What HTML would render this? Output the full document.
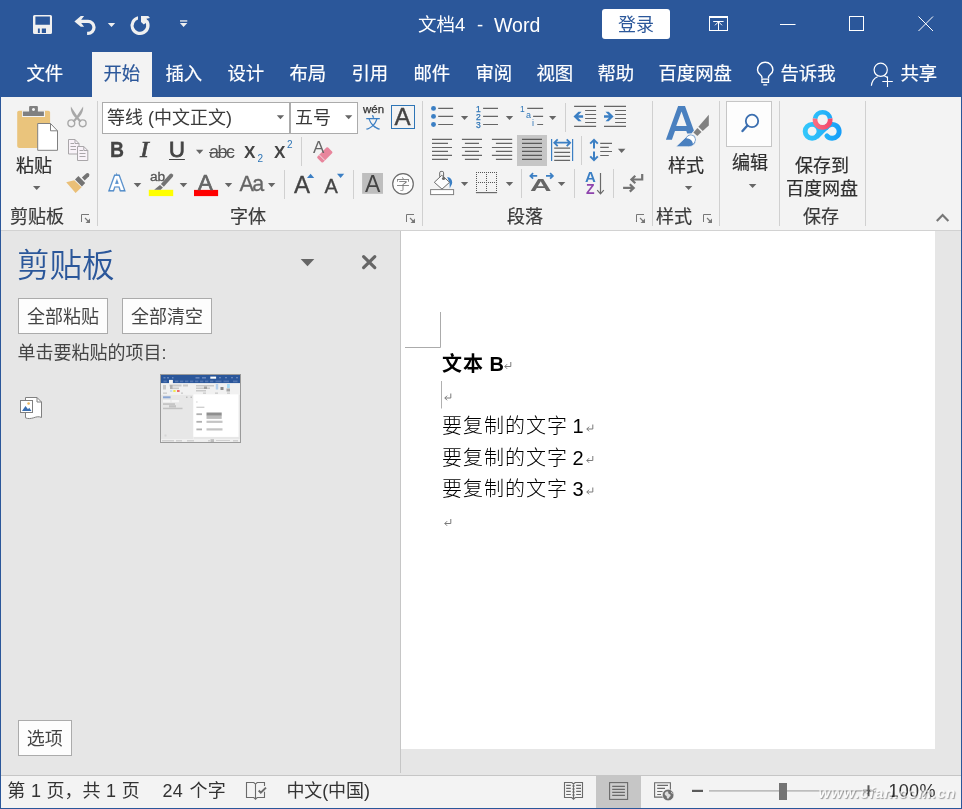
<!DOCTYPE html>
<html lang="zh-CN">
<head>
<meta charset="utf-8">
<title>文档4 - Word</title>
<style>
*{box-sizing:border-box;margin:0;padding:0}
html,body{width:962px;height:809px;overflow:hidden;background:#2b579a}
body{position:relative;font-family:"Liberation Sans","Noto Sans CJK SC",sans-serif;font-size:18px;color:#262626}
.a{position:absolute;white-space:nowrap;line-height:1}
#root{position:absolute;left:0;top:0;width:962px;height:809px;will-change:transform}
.lcd{will-change:auto}
svg{position:absolute;overflow:visible;left:0;top:0}
#title{left:0;top:0;width:962px;height:97px;background:#2b579a}
.tt{color:#fff;font-size:18px}
.tab{color:#fff;font-size:18.400px;top:64px;height:20px;line-height:20px;margin-left:-0.600px;-webkit-text-stroke:0.2px currentColor}
#tabhome{left:92px;top:52px;width:60px;height:46px;background:#f3f3f3}
#ribbon{left:1px;top:97px;width:960px;height:133px;background:#f3f3f3}
#ribline{left:1px;top:230px;width:960px;height:1px;background:#d2d2d2}
.gl{font-size:18px;color:#3a3a3a;top:207px;height:20px;line-height:20px;-webkit-text-stroke:0.2px #3a3a3a}
.rt{font-size:18px;color:#2e2e2e;height:20px;line-height:20px;-webkit-text-stroke:0.2px #2e2e2e}
.g{color:#444}
.lt{font-family:"Liberation Sans",sans-serif;color:#444}
#pane{left:1px;top:231px;width:400px;height:544px;background:#e6e6e6}
#panediv{left:400px;top:231px;width:1px;height:542px;background:#c6c6c6}
#work{left:401px;top:231px;width:560px;height:544px;background:#e6e6e6}
#page{left:401px;top:231px;width:534px;height:518px;background:#fff}
#status{left:1px;top:775px;width:960px;height:33px;background:#f3f3f3;border-top:1px solid #c6c6c6}
.st{font-size:18px;color:#333;top:781px;height:20px;line-height:20px}
.btn{background:#fdfdfd;border:1px solid #ababab;font-size:18px;color:#444;text-align:center}
.doc{font-size:20px;color:#000;letter-spacing:1px;height:24px;line-height:24px}
.box{background:#fff;border:1px solid #ababab}
</style>
</head>
<body>
<div id="root">
<div class="a" id="title"></div>
<div class="a" id="tabhome"></div>
<div class="a" id="ribbon"></div>
<div class="a" id="ribline"></div>
<div class="a" id="pane"></div>
<div class="a" id="work"></div>
<div class="a" id="page"></div>
<div class="a" id="panediv"></div>
<div class="a" id="status"></div>

<!-- TITLE BAR -->
<div class="a tt" style="left:418px;top:15px;height:20px;line-height:20px;font-size:18.5px">文档4</div>
<div class="a tt" style="left:477px;top:15px;height:20px;line-height:20px;font-size:18.5px">-</div>
<div class="a tt" style="left:494px;top:15px;height:20px;line-height:20px;font-size:19.5px">Word</div>
<div class="a" style="left:602px;top:9px;width:68px;height:30px;background:#fff;border-radius:3px;color:#2b579a;font-size:18px;line-height:33px;text-align:center">登录</div>

<svg id="ticons" width="962" height="97" viewBox="0 0 962 97">
 <g fill="#f0f0f0">
  <path fill-rule="evenodd" d="M34.5 15h16a1.5 1.5 0 0 1 1.5 1.5v16a1.5 1.5 0 0 1-1.5 1.5h-16a1.5 1.5 0 0 1-1.5-1.5v-16a1.5 1.5 0 0 1 1.5-1.5zM35.4 16.4v8.4h14.5v-8.4zM37.9 28.4v4.6h1.9v-4.6zM41.8 28.4v4.6h4.2v-4.6z"/>
  <path d="M74.4 21.4l6.4-5.400h3.300l-2.900 3.700h6.800a7.650 7.650 0 0 1 0 15.300h-0.900v-3.300h0.900a4.350 4.350 0 0 0 0-8.700h-6.800l2.900 3.700h-3.300z"/>
  <path d="M107.800 22.900h7.400l-3.700 4.100z"/>
  <path d="M138 16.200v3.300a6.300 6.300 0 1 0 7.300 2.600l2.600-2a9.550 9.550 0 1 1-9.900-3.900z"/>
  <path d="M141 15.900h7.200l1.800 2.200-3.600 0.600 1.700 2.500-4.300 3.300-2.800-2.600z"/>
  <rect x="180" y="20.300" width="7.300" height="1.300"/>
  <path d="M179.900 22.900h7.400l-3.700 4.100z"/>
 </g>
 <g fill="none" stroke="#fff" stroke-width="1">
  <rect x="709.500" y="16.500" width="18" height="14"/>
  <path d="M709.500 17.500h18M713.200 21.500h10.400M718.500 30v-8M715 25.300l3.500-3.500 3.500 3.500"/>
  <path d="M780 24.500h15.500"/>
  <rect x="849.500" y="16.500" width="14" height="14"/>
  <path d="M918.500 16.500l14.500 14.500M933 16.500l-14.500 14.500"/>
 </g>
 <g fill="none" stroke="#fff" stroke-width="1.400">
  <path d="M761.900 78.400v-1.500c0-1.700-4.400-3.300-4.400-7a7.700 7.700 0 0 1 15.400 0c0 3.700-4.400 5.300-4.400 7v1.500"/>
  <path stroke-width="1.300" d="M761.900 79.100h6.600v3.200h-6.600zM763.300 84.800h3.900"/>
 </g>
 <g fill="none" stroke="#fff" stroke-width="1.200">
  <circle cx="880.700" cy="69.800" r="6.600"/>
  <path d="M871.400 85.800c0.400-4.400 2.600-7.600 6.200-9.100M884 75.700c1.300 0.400 2.400 1 3.300 1.800"/>
  <path stroke-width="1.100" d="M882.300 81.500h10.500M887.500 76.500v10.500"/>
 </g>
</svg>

<!-- TABS -->
<div class="a tab" style="left:27px">文件</div>
<div class="a tab" style="left:104px;color:#2b579a">开始</div>
<div class="a tab" style="left:166px">插入</div>
<div class="a tab" style="left:228px">设计</div>
<div class="a tab" style="left:290px">布局</div>
<div class="a tab" style="left:352px">引用</div>
<div class="a tab" style="left:414px">邮件</div>
<div class="a tab" style="left:476px">审阅</div>
<div class="a tab" style="left:537px">视图</div>
<div class="a tab" style="left:598px">帮助</div>
<div class="a tab" style="left:659px">百度网盘</div>
<div class="a tab" style="left:781px">告诉我</div>
<div class="a tab" style="left:901px">共享</div>

<!-- RIBBON -->
<div class="a box" style="left:102px;top:102px;width:188px;height:32px"></div>
<div class="a box" style="left:290px;top:102px;width:68px;height:32px"></div>
<svg id="ribicons" width="962" height="231" viewBox="0 0 962 231">
<rect x="97" y="101" width="1" height="125" fill="#d0d0d0"/>
<rect x="422" y="101" width="1" height="125" fill="#d0d0d0"/>
<rect x="652" y="101" width="1" height="125" fill="#d0d0d0"/>
<rect x="719" y="101" width="1" height="125" fill="#d0d0d0"/>
<rect x="779" y="101" width="1" height="125" fill="#d0d0d0"/>
<rect x="865" y="101" width="1" height="125" fill="#d0d0d0"/>
<rect x="301" y="137" width="1" height="29" fill="#d0d0d0"/>
<rect x="284" y="170" width="1" height="29" fill="#d0d0d0"/>
<rect x="353" y="170" width="1" height="29" fill="#d0d0d0"/>
<rect x="565" y="103" width="1" height="29" fill="#d0d0d0"/>
<rect x="581" y="136" width="1" height="29" fill="#d0d0d0"/>
<rect x="521" y="169" width="1" height="29" fill="#d0d0d0"/>
<rect x="574" y="169" width="1" height="29" fill="#d0d0d0"/>
<rect x="613" y="169" width="1" height="29" fill="#d0d0d0"/>
<g id="paste">
<rect x="17.200" y="110.800" width="32.900" height="37.100" rx="1.800" fill="#eac47c"/>
<path fill="#f3f3f3" d="M22 110.500h6.300v-5.200h10.400v5.200h6.300v6.400h-23z"/>
<path fill="#808080" fill-rule="evenodd" d="M22.900 111.600h6.200v-4.500a1 1 0 0 1 1-1h6.800a1 1 0 0 1 1 1v4.500h6v4.300h-21zM33.500 108a1.500 1.500 0 1 0 0.010 0z"/>
<path fill="#fff" stroke="#808080" stroke-width="1" d="M37.700 123.500h12.800l7 7.300v19.500h-19.800z"/>
<path fill="none" stroke="#808080" stroke-width="1" d="M50.500 123.500v7.300h7"/>
</g>
<path fill="#666" d="M33 186H40.4L36.7 190.1z"/>
<g id="cut" fill="none" stroke="#a8a8a8">
<circle cx="71.300" cy="123.300" r="3.400" stroke-width="1.400"/><circle cx="82.700" cy="123.300" r="3.400" stroke-width="1.400"/>
<path fill="#a8a8a8" stroke="none" d="M70.900 106.400c-0.600 4.500 1.800 8.500 4.600 11.400l-3 3.200 1.700 1.400 2.800-3.200 2.800 3.200 1.700-1.400-3-3.200c2.800-2.900 5.200-6.900 4.600-11.400l-6.100 9.400z"/>
</g>
<g id="copy" fill="#f8f2f8" stroke="#a9a6a9" stroke-width="1">
<path d="M68.500 139.500h6.500l4 4v10.500h-10.500z"/><path fill="none" d="M75 139.500v4h4"/>
<path d="M77.500 146.500h6.300l4 4v10h-10.300z"/><path fill="none" d="M83.800 146.500v4h4"/>
<path fill="none" d="M70.500 143.500h3.500M70.500 146.500h5.500M70.500 149.500h5.500M79.500 150.500h3.500M79.500 153.500h6M79.500 156.500h6"/>
</g>
<g id="painter">
<path fill="#eabf77" d="M66.200 182.300l8.100-2 7.300 6.900-6 5.800z"/>
<path fill="#737373" d="M75 179.600l3.400-3.600 6.800 6.900-3.300 3.500z"/>
<path fill="#737373" d="M81.900 177.600l4.300-4.200a2 2 0 0 1 2.800 2.800l-4.300 4.200z"/>
</g>
<path fill="none" stroke="#777" stroke-width="1" d="M81.5 222V214.5H89"/><path fill="none" stroke="#777" stroke-width="1.1" d="M85 218L89 222"/><path fill="#777" d="M90 218.6V223H85.6z"/>
<g id="hl">
<rect x="148.800" y="189.800" width="24.400" height="6.300" fill="#ffff00"/>
<path fill="#737373" d="M169.900 174.100a2 2 0 0 1 2.900 2.700l-9 9.900-2.900-2.700z"/>
<path fill="#737373" d="M160 184.900l2.900 2.700-2.200 2.200h-6.500z"/>
</g>
<rect x="194" y="189.900" width="24.100" height="6.200" fill="#ff0000"/>
<path fill="#666" d="M133.7 182.9H141.3L137.5 187.2z"/>
<path fill="#666" d="M179.7 182.9H187.3L183.5 187.2z"/>
<path fill="#666" d="M224.8 182.9H232.2L228.5 187.2z"/>
<path fill="#666" d="M268 182.9H275.3L271.65 187.2z"/>
<path fill="#666" d="M196 149.8H203.3L199.65 154z"/>
<path fill="#666" d="M276.8 115.2H284.1L280.45 119.2z"/>
<path fill="#666" d="M345 115.2H352.3L348.65 119.2z"/>
<rect x="-7.500" y="-4" width="15" height="8" rx="1.200" fill="#e8859c" transform="translate(324.800 154.900) rotate(-45)"/>
<path stroke="#f3f3f3" stroke-width="0.800" d="M319.200 154.800l5.700 5.700"/>
<path fill="#3b7fc4" d="M307 177.900h7.200l-3.600-4.200z"/>
<path fill="#3b7fc4" d="M337 173.700h7.200l-3.600 4.200z"/>
<rect x="391.500" y="105.500" width="23" height="23" fill="none" stroke="#2e75b6" stroke-width="1"/>
<rect x="362.100" y="173" width="20.900" height="20.800" fill="#bebebe"/>
<circle cx="403" cy="183.900" r="10.300" fill="#fdfdfd" stroke="#6a6a6a" stroke-width="1.200"/>
<path fill="none" stroke="#777" stroke-width="1" d="M406.5 222V214.5H414"/><path fill="none" stroke="#777" stroke-width="1.1" d="M410 218L414 222"/><path fill="#777" d="M415 218.6V223H410.6z"/>
<g fill="#3b7fc4"><circle cx="433.500" cy="108.400" r="2.450"/><circle cx="433.500" cy="116.400" r="2.450"/><circle cx="433.500" cy="124.500" r="2.450"/></g>
<path fill="none" stroke="#666" stroke-width="1.2" d="M438.2 108.4H453.1M438.2 116.4H453.1M438.2 124.5H453.1"/>
<path fill="#666" d="M460.9 116H468.2L464.55 120.1z"/>
<path fill="none" stroke="#666" stroke-width="1.2" d="M483.1 108.4H498M483.1 116.4H498M483.1 124.5H498"/>
<path fill="#666" d="M505.8 116H513.2L509.5 120.1z"/>
<path fill="none" stroke="#666" stroke-width="1.2" d="M527.2 108.4H543.1M533.1 116.4H543.1M537.2 124.5H543.1"/>
<path fill="#666" d="M549 116H556.3L552.65 120.1z"/>
<path fill="none" stroke="#666" stroke-width="1.2" d="M574.1 106.4H596.1M585.1 110.5H596.1M585.1 114.5H596.1M585.1 118.5H596.1M585.1 122.5H596.1M574.1 126.4H596.1"/>
<path fill="#3b7fc4" d="M573.500 116.500l4.900-4.800h3.200l-3.400 3.500h4.900v2.600h-4.900l3.400 3.500h-3.200z"/>
<path fill="none" stroke="#666" stroke-width="1.2" d="M604 106.4H626M615.1 110.5H626M615.1 114.5H626M615.1 118.5H626M615.1 122.5H626M604 126.4H626"/>
<path fill="#3b7fc4" d="M613.600 116.500l-4.900-4.800h-3.200l3.400 3.500h-4.900v2.600h4.900l-3.400 3.500h3.200z"/>
<path fill="none" stroke="#666" stroke-width="1.2" d="M432 139.4H452M432 143.4H448M432 147.5H452M432 151.4H448M432 155.4H452M432 159.4H448"/>
<path fill="none" stroke="#666" stroke-width="1.2" d="M461.9 139.4H482M464.9 143.4H479M461.9 147.5H482M464.9 151.4H479M461.9 155.4H482M464.9 159.4H479"/>
<path fill="none" stroke="#666" stroke-width="1.2" d="M491.9 139.4H512.2M495.9 143.4H512.2M491.9 147.5H512.2M495.9 151.4H512.2M491.9 155.4H512.2M495.9 159.4H512.2"/>
<rect x="517" y="135" width="30" height="31" fill="#c6c6c6"/>
<path fill="none" stroke="#5a5a5a" stroke-width="1.2" d="M522 139.4H542M522 143.4H542M522 147.5H542M522 151.4H542M522 155.4H542M522 159.4H542"/>
<path fill="none" stroke="#3b7fc4" stroke-width="1.200" d="M551.600 138.900v22M572.600 138.900v22"/>
<path fill="none" stroke="#3b7fc4" stroke-width="1.800" d="M554.400 142.700h15.600M557.700 139.300l-3.400 3.400 3.400 3.400M566.700 139.300l3.400 3.400-3.400 3.400"/>
<path fill="none" stroke="#666" stroke-width="1.2" d="M554.2 148.2H570.1M554.2 152.3H570.1M554.2 156.4H570.1M554.2 160.4H570.1"/>
<path fill="none" stroke="#3b7fc4" stroke-width="2" d="M594 140.200v8.400M594 151.400v8.400M590.200 143.600l3.800-3.800 3.800 3.800M590.200 156.400l3.800 3.800 3.800-3.800"/>
<path fill="none" stroke="#666" stroke-width="1.2" d="M600.2 143.4H612M600.2 147.4H608.8M600.2 151.5H612M600.2 155.5H608.8"/>
<path fill="#666" d="M617.9 148.8H625.4L621.65 153.1z"/>
<g id="bucket">
<rect x="430.600" y="189.600" width="23" height="5" fill="#fff" stroke="#808080" stroke-width="1"/>
<path fill="#3b7fc4" d="M447.200 177c3.200 0.400 5 2.600 5 5.600 0 2-1.600 3.700-2.400 5.800l-0.300-5.600z"/>
<path fill="#fdfdfd" stroke="#6a6a6a" stroke-width="1" d="M434.300 182.300l7.500-7 7.800 7-7.600 6.800z"/>
<path fill="none" stroke="#6a6a6a" stroke-width="1" d="M439.700 176.800v-4a1.400 1.400 0 0 1 1.400-1.400h1.100a1.400 1.400 0 0 1 1.400 1.400v5.500"/>
<circle cx="443.500" cy="178.500" r="1.600" fill="#6a6a6a"/>
</g>
<path fill="#666" d="M460.9 182H468.2L464.55 186z"/>
<path fill="none" stroke="#555" stroke-width="1" stroke-dasharray="1 1" shape-rendering="crispEdges" d="M476 172.500h21M476 182.500h21M476.500 172v20M486.500 172v20M496.500 172v20"/>
<path fill="none" stroke="#6a6a6a" stroke-width="1.200" d="M475.900 192.600h21.200"/>
<path fill="#666" d="M505.8 182H513.2L509.5 186z"/>
<path fill="none" stroke="#3b7fc4" stroke-width="1.700" d="M530.300 175.900h6.900M533.100 173.100l-2.800 2.800 2.800 2.800M546 175.900h6.900M550.100 173.100l2.800 2.800-2.800 2.800"/>
<path fill="#666" d="M557.8 182H565.3L561.55 186z"/>
<path fill="none" stroke="#6a6a6a" stroke-width="1.200" d="M600.500 173v20.500M597.200 190.200l3.300 3.600 3.300-3.600"/>
<path fill="none" stroke="#737373" stroke-width="2.200" d="M642.200 174v5.500h-10.500M635.300 175.700l-3.900 3.800 3.900 3.800M623.100 187.900h10.500M629.800 184.200l3.900 3.700-3.900 3.700"/>
<path fill="none" stroke="#777" stroke-width="1" d="M636.5 222V214.5H644"/><path fill="none" stroke="#777" stroke-width="1.1" d="M640 218L644 222"/><path fill="#777" d="M645 218.6V223H640.6z"/>
<g id="styles">
<path fill="#4a80bf" fill-rule="evenodd" d="M678.100 106h6.900l8.900 24.600-2.500 2.900h-4.200l-0.900-2.600h-11.300l-3.100 8.900h-6zM681.500 111.500l-5.300 14.400h10.500z"/>
<path fill="#808080" d="M708.800 114.700v10.900l-6.100 5.300-4.300-4.200z"/>
<path fill="#808080" d="M693.400 132.400l4-4.300 4.100 4-4.200 4z"/>
<path fill="#4a80bf" stroke="#f3f3f3" stroke-width="0.700" d="M675.900 146.700l10.500-10c1-1.500 2.600-2.500 4.400-2.500a5.200 5.200 0 0 1 5.200 5.200c0 4.200-3.300 7.300-7.500 7.300z"/>
<path fill="#fff" d="M686.300 138.300c0.800-1.800 2.500-3.100 4.500-3.100a4.200 4.200 0 0 1 4.200 4.200c0 1.800-0.800 3.300-2.100 4.500-0.200-3-2.800-5.500-6.600-5.600z"/>
</g>
<path fill="#666" d="M684.9 186H692.3L688.6 190.1z"/>
<path fill="none" stroke="#777" stroke-width="1" d="M703.5 222V214.5H711"/><path fill="none" stroke="#777" stroke-width="1.1" d="M707 218L711 222"/><path fill="#777" d="M712 218.6V223H707.6z"/>
<rect x="726.500" y="101.500" width="45" height="45" fill="#fdfdfd" stroke="#c6c6c6" stroke-width="1"/>
<circle cx="752" cy="120.900" r="6.200" fill="none" stroke="#3b6fb0" stroke-width="1.800"/>
<path fill="none" stroke="#3b6fb0" stroke-width="2.400" stroke-linecap="round" d="M747.200 125.800l-4.700 5.200"/>
<path fill="#666" d="M748.8 183.9H756.4L752.6 188.1z"/>
<defs><linearGradient id="bg1" gradientUnits="userSpaceOnUse" x1="803" y1="0" x2="842" y2="0"><stop offset="0" stop-color="#34c8fb"/><stop offset="0.5" stop-color="#27b6f9"/><stop offset="1" stop-color="#159cf8"/></linearGradient><linearGradient id="bg2" gradientUnits="userSpaceOnUse" x1="813" y1="0" x2="832" y2="0"><stop offset="0" stop-color="#fb6f82"/><stop offset="1" stop-color="#f4476a"/></linearGradient></defs>
<g id="baidu" fill="none" stroke-width="4.900" stroke="url(#bg1)">
<circle cx="812.100" cy="131.300" r="6.950"/>
<path stroke-linecap="round" d="M826.900 135.800a6.950 6.950 0 1 0 -0.700-8"/>
<path stroke-width="5.200" d="M816.600 136.700l10.800-10.800"/>
<path stroke-width="4.700" d="M815.100 118.600a7.600 7.600 0 0 1 15 0"/>
<path stroke-width="4.700" stroke="url(#bg2)" d="M815.100 118.600a7.600 7.600 0 1 0 15 0"/>
</g>
<path fill="none" stroke="#777" stroke-width="2.200" d="M936.800 221l5.800-6 5.800 6"/>
</svg>

<!-- ribbon text -->
<div class="a rt" style="left:16px;top:156px">粘贴</div>
<div class="a gl" style="left:10px">剪贴板</div>
<div class="a rt" style="left:107px;top:108px;color:#3a3a3a;-webkit-text-stroke:0">等线 (中文正文)</div>
<div class="a rt" style="left:295px;top:108px;color:#3a3a3a;-webkit-text-stroke:0">五号</div>
<div class="a lt" style="left:363px;top:103px;font-size:11.500px;height:12px;line-height:12px;color:#333;-webkit-text-stroke:0.25px #333">wén</div>
<div class="a" style="left:365.500px;top:114px;font-size:15px;height:18px;line-height:18px;color:#3b7fc4">文</div>
<div class="a lt" style="left:394px;top:105px;font-size:24px;height:24px;line-height:24px;width:17px;text-align:center;-webkit-text-stroke:0.4px #444">A</div>
<div class="a lt" style="left:110px;top:139px;font-size:22px;height:22px;line-height:22px;font-weight:bold;-webkit-text-stroke:0.3px #444;transform:scaleX(0.88);transform-origin:0 0">B</div>
<div class="a" style="left:140px;top:139px;font-family:'Liberation Serif',serif;color:#444;font-size:23px;height:22px;line-height:22px;font-style:italic;-webkit-text-stroke:0.6px #444;transform:scaleX(1.15);transform-origin:0 0">I</div>
<div class="a lt" style="left:169px;top:139px;font-size:22px;height:22px;line-height:22px;text-decoration:underline;text-underline-offset:2px;text-decoration-thickness:1px;-webkit-text-stroke:0.8px #444">U</div>
<div class="a lt" style="left:209px;top:141px;font-size:18px;height:22px;line-height:22px;text-decoration:line-through;text-decoration-thickness:1px;letter-spacing:-1.5px;color:#555">abc</div>
<div class="a lt" style="left:244.300px;top:142px;font-size:16.5px;height:20px;line-height:20px;font-weight:bold;transform:scaleX(1.04);transform-origin:0 0">X</div>
<div class="a lt" style="left:257.500px;top:154px;font-size:10px;height:10px;line-height:10px;color:#2e75b6">2</div>
<div class="a lt" style="left:274px;top:142px;font-size:16.5px;height:20px;line-height:20px;font-weight:bold;transform:scaleX(1.04);transform-origin:0 0">X</div>
<div class="a lt" style="left:287px;top:140px;font-size:10px;height:10px;line-height:10px;color:#2e75b6">2</div>
<div class="a lt" style="left:313px;top:139px;font-size:17px;height:18px;line-height:18px;color:#666">A</div>
<div class="a lt" style="left:109.500px;top:171px;font-size:20.500px;height:24px;line-height:24px;font-weight:bold;color:#fff;-webkit-text-stroke:2.800px #4a86c5;paint-order:stroke fill;text-shadow:0 0 2px #a8c8ee">A</div>
<div class="a lt" style="left:149.500px;top:171px;font-size:12px;height:12px;line-height:12px;color:#555;-webkit-text-stroke:0.3px #555;transform:scaleX(1.14);transform-origin:0 0">ab</div>
<div class="a lt" style="left:198px;top:171px;font-size:22px;height:24px;line-height:24px;color:#666;-webkit-text-stroke:0.7px #666">A</div>
<div class="a lt" style="left:239.500px;top:172px;font-size:21.500px;height:24px;line-height:24px;color:#666;letter-spacing:-1.500px;-webkit-text-stroke:0.3px #666">Aa</div>
<div class="a lt" style="left:294px;top:173px;font-size:24px;height:24px;line-height:24px;-webkit-text-stroke:0.3px #444">A</div>
<div class="a lt" style="left:324.500px;top:175px;font-size:20px;height:22px;line-height:22px;-webkit-text-stroke:0.3px #444">A</div>
<div class="a lt" style="left:365px;top:172px;font-size:23px;height:24px;line-height:24px">A</div>
<div class="a" style="left:396px;top:176px;font-size:14px;height:16px;line-height:16px;color:#666;font-weight:300">字</div>
<div class="a gl" style="left:230px">字体</div>
<div class="a lt" style="left:476px;top:105px;font-size:8.500px;height:8px;line-height:8px;color:#2e75b6;-webkit-text-stroke:0.25px #2e75b6">1</div>
<div class="a lt" style="left:476px;top:113px;font-size:8.500px;height:8px;line-height:8px;color:#2e75b6;-webkit-text-stroke:0.25px #2e75b6">2</div>
<div class="a lt" style="left:476px;top:121px;font-size:8.500px;height:8px;line-height:8px;color:#2e75b6;-webkit-text-stroke:0.25px #2e75b6">3</div>
<div class="a lt" style="left:520px;top:105px;font-size:8.500px;height:8px;line-height:8px;color:#2e75b6">1</div>
<div class="a lt" style="left:526px;top:111px;font-size:9px;height:9px;line-height:9px;color:#2e75b6">a</div>
<div class="a lt" style="left:532px;top:119px;font-size:9px;height:9px;line-height:9px;color:#2e75b6">i</div>
<div class="a lt" style="left:530px;top:176px;font-size:16.500px;height:18px;line-height:18px;color:#666;font-weight:bold;transform:scale(1.8,1);transform-origin:0 0">A</div>
<div class="a lt" style="left:585px;top:169px;font-size:15px;height:16px;line-height:16px;color:#3b7fc4;font-weight:bold">A</div>
<div class="a lt" style="left:586px;top:182px;font-size:14px;height:15px;line-height:15px;color:#8e44ad;font-weight:bold">Z</div>
<div class="a gl" style="left:507px">段落</div>
<div class="a gl" style="left:656px">样式</div>
<div class="a gl" style="left:803px">保存</div>
<div class="a rt" style="left:668px;top:156px">样式</div>
<div class="a rt" style="left:732px;top:153px">编辑</div>
<div class="a rt" style="left:795px;top:156px">保存到</div>
<div class="a rt" style="left:786px;top:179px">百度网盘</div>

<!-- PANE -->
<div class="a" style="left:17px;top:247px;font-size:32.500px;color:#2b579a;height:38px;line-height:38px;font-weight:350">剪贴板</div>
<svg width="962" height="809" viewBox="0 0 962 809" id="paneicons">
 <path fill="#666" d="M300.700 259h13.600l-6.800 7.200z"/>
 <path fill="none" stroke="#666" stroke-width="3.200" stroke-linecap="round" d="M363.600 256.600l11.200 11M374.800 256.600l-11.200 11"/>
 <!-- picture icon -->
 <path fill="#fff" stroke="#808080" stroke-width="1" d="M25.500 397.500h11.500l4.500 4.500v15.500c-3-1.500-5.500-0.500-8 0.300s-5.500 1.200-8 0z"/>
 <path fill="none" stroke="#808080" stroke-width="1" d="M37 397.500v4.500h4.500"/>
 <rect x="20.500" y="400.500" width="12" height="12" fill="#fff" stroke="#808080" stroke-width="1"/>
 <path fill="#3b6fb0" d="M22 411l3.500-5 2.500 3.300 1.200-1.500 2.300 3.200z"/>
 <circle cx="28.600" cy="403.500" r="1.300" fill="#eab65f"/>
 <!-- thumbnail -->
 <defs><filter id="bl" x="-5%" y="-5%" width="110%" height="110%"><feGaussianBlur stdDeviation="0.45"/></filter>
 <clipPath id="tc"><rect x="161" y="375" width="79" height="67"/></clipPath></defs>
 <rect x="160.500" y="374.500" width="80" height="68" fill="#fff" stroke="#9a9a9a" stroke-width="1"/>
 <g clip-path="url(#tc)"><g filter="url(#bl)">
 <rect x="159" y="373" width="83" height="10.300" fill="#2b579a"/>
 <rect x="159" y="383.300" width="83" height="11.300" fill="#f1f1f1"/>
 <rect x="159" y="394.600" width="34.500" height="44.500" fill="#e7e7e7"/>
 <rect x="193.500" y="394.600" width="45.100" height="42.300" fill="#fff"/>
 <rect x="238.600" y="394.600" width="4" height="44" fill="#e7e7e7"/>
 <rect x="193.500" y="436.900" width="47" height="2.300" fill="#e7e7e7"/>
 <rect x="159" y="439.200" width="83" height="4" fill="#efefef"/>
 <rect x="169" y="379.900" width="3.900" height="4" fill="#f3f3f3"/>
 <rect x="210.300" y="376.600" width="5.800" height="2.100" fill="#fff"/>
 <g fill="#6484bb"><rect x="163.500" y="377" width="2" height="1.500"/><rect x="167" y="377" width="2" height="1.500"/><rect x="172" y="377" width="1.500" height="1.500"/><rect x="195.500" y="377" width="4" height="1.600"/><rect x="202" y="377" width="4" height="1.600"/><rect x="219" y="377" width="2" height="1.300"/><rect x="225" y="377" width="2" height="1.300"/><rect x="231" y="377" width="2" height="1.300"/><rect x="236" y="377" width="2" height="1.300"/></g>
 <g fill="#5274b0"><rect x="163.500" y="380.500" width="3.300" height="1.800"/><rect x="175" y="380.500" width="3.300" height="1.800"/><rect x="180" y="380.500" width="3.300" height="1.800"/><rect x="185" y="380.500" width="3.300" height="1.800"/><rect x="190" y="380.500" width="3.300" height="1.800"/><rect x="195" y="380.500" width="3.300" height="1.800"/><rect x="200" y="380.500" width="3.300" height="1.800"/><rect x="205" y="380.500" width="3.300" height="1.800"/><rect x="210" y="380.500" width="3.300" height="1.800"/><rect x="215.500" y="380.500" width="6" height="1.800"/><rect x="223.500" y="380.500" width="5.500" height="1.800"/><rect x="233" y="380.500" width="4.500" height="1.800"/></g>
 <g fill="#c9c9c9"><rect x="163" y="385" width="3" height="4.500"/><rect x="169.500" y="384.500" width="12" height="2"/><rect x="183" y="384.500" width="5" height="2"/><rect x="170" y="387.500" width="9" height="1.600"/><rect x="196" y="385" width="18" height="1.500"/><rect x="196" y="387.500" width="14" height="1.500"/><rect x="196" y="390" width="10" height="1.500"/><rect x="163" y="392.500" width="4" height="1.300"/><rect x="181" y="392.500" width="2" height="1.300"/><rect x="203" y="392.500" width="3" height="1.300"/><rect x="215" y="392.500" width="3" height="1.300"/><rect x="227" y="392.500" width="3" height="1.300"/></g>
 <rect x="204" y="386.500" width="3" height="2.500" fill="#a0a0a0"/><rect x="220.500" y="387" width="3" height="3" fill="#8a8a8a"/><rect x="226.500" y="388.500" width="3.500" height="3" fill="#a8a8a8"/>
 <rect x="170" y="385" width="2.500" height="4" fill="#b0b0b0"/>
 <rect x="170" y="390" width="2.300" height="2" fill="#c6dcf2"/><rect x="173.300" y="390" width="2.300" height="2" fill="#f0e850"/><rect x="177" y="390" width="2.600" height="2" fill="#ee6a6a"/>
 <rect x="215.800" y="384" width="2.400" height="5.500" fill="#b4d0ee"/><rect x="227" y="384" width="2.800" height="4" fill="#a6daf6"/>
 <rect x="163" y="396.300" width="7.600" height="2" fill="#8aa6d4"/>
 <rect x="186" y="396.500" width="1.500" height="1.500" fill="#bdbdbd"/><rect x="190.500" y="396.500" width="1.500" height="1.500" fill="#bdbdbd"/>
 <rect x="163" y="400" width="7.500" height="2.300" fill="#f6f6f6"/><rect x="171.500" y="400" width="7.500" height="2.300" fill="#f6f6f6"/>
 <rect x="163" y="403.400" width="12" height="1.300" fill="#b8b8b8"/>
 <rect x="169" y="405.200" width="7" height="2.300" fill="#c2c2c2"/>
 <rect x="163" y="407.700" width="19.500" height="1.500" fill="#c2c2c2"/>
 <rect x="164.500" y="434.500" width="2" height="2" fill="#d6d6d6"/>
 <rect x="196.400" y="406.700" width="8" height="1.100" fill="#c4c4c4"/>
 <rect x="196.400" y="401" width="1" height="2" fill="#ddd"/>
 <rect x="196.400" y="413.300" width="5.600" height="1.800" fill="#b0b0b0"/>
 <rect x="206.500" y="412.500" width="15.200" height="3.300" fill="#8f8f8f"/><rect x="206.500" y="415.800" width="15.200" height="3.100" fill="#bcbcbc"/>
 <rect x="196.400" y="420.900" width="5.600" height="1.800" fill="#b0b0b0"/><rect x="206.500" y="420.700" width="16" height="2.200" fill="#c4c4c4"/>
 <rect x="196.400" y="428.500" width="5.600" height="1.800" fill="#b0b0b0"/><rect x="206.500" y="428.300" width="16" height="2.200" fill="#c4c4c4"/>
 <g fill="#d0d0d0"><rect x="162" y="440" width="12" height="1.500"/><rect x="176" y="440" width="6" height="1.500"/><rect x="187" y="440" width="7" height="1.500"/><rect x="208" y="440" width="2" height="1.500"/><rect x="216" y="440" width="14" height="1"/><rect x="233" y="440" width="5" height="1.500"/></g>
 <rect x="210.500" y="439.200" width="3.500" height="3" fill="#bdbdbd"/>
 </g></g>
 <rect x="160.500" y="374.500" width="80" height="68" fill="none" stroke="#9a9a9a" stroke-width="1"/>
</svg>
<div class="a btn" style="left:18px;top:298px;width:90px;height:36px;line-height:35px;padding-top:1px">全部粘贴</div>
<div class="a btn" style="left:122px;top:298px;width:90px;height:36px;line-height:35px;padding-top:1px">全部清空</div>
<div class="a g" style="left:17.500px;top:343px;font-size:18px;height:20px;line-height:20px">单击要粘贴的项目:</div>
<div class="a btn" style="left:18px;top:720px;width:54px;height:36px;line-height:35px;padding-top:1px;text-indent:-0.5px">选项</div>

<!-- DOCUMENT -->
<svg width="962" height="809" viewBox="0 0 962 809" id="docmarks">
 <path fill="none" stroke="#ababab" stroke-width="1" d="M440.500 312v35.500h-35.500"/>
 <path fill="none" stroke="#b0b0b0" stroke-width="1" d="M441.500 381v27.500"/>
 <g fill="none" stroke="#7a7a7a" stroke-width="1">
  <path id="pm" d="M6.500 0.500v4.500h-6M2.800 2.700l-2.300 2.300 2.300 2.300" transform="translate(504.300 361.500)"/>
  <path d="M6.500 0.500v4.500h-6M2.800 2.700l-2.300 2.300 2.300 2.300" transform="translate(444.300 393)"/>
  <path d="M6.500 0.500v4.500h-6M2.800 2.700l-2.300 2.300 2.300 2.300" transform="translate(586.300 424)"/>
  <path d="M6.500 0.500v4.500h-6M2.800 2.700l-2.300 2.300 2.300 2.300" transform="translate(586.300 455.500)"/>
  <path d="M6.500 0.500v4.500h-6M2.800 2.700l-2.300 2.300 2.300 2.300" transform="translate(586.300 487)"/>
  <path d="M6.500 0.500v4.500h-6M2.800 2.700l-2.300 2.300 2.300 2.300" transform="translate(444.300 518.500)"/>
 </g>
</svg>
<div class="a doc" style="left:442px;top:352px;font-weight:bold;word-spacing:-1px;-webkit-text-stroke:0">文本 B</div>
<div class="a doc" style="left:442px;top:414px;font-weight:300;word-spacing:-2px">要复制的文字 1</div>
<div class="a doc" style="left:442px;top:446px;font-weight:300;word-spacing:-2px">要复制的文字 2</div>
<div class="a doc" style="left:442px;top:477px;font-weight:300;word-spacing:-2px">要复制的文字 3</div>

<!-- STATUS -->
<div class="a" style="left:596px;top:776px;width:45px;height:32px;background:#c6c6c6"></div>
<svg width="962" height="809" viewBox="0 0 962 809" id="sticons">
 <g fill="none" stroke="#6a6a6a" stroke-width="1.100">
  <path d="M264.500 786v-3.500h-7.300l-1.700 1.600-1.700-1.600h-7.300v15h7.300l1.700 1.800 1.700-1.800h7.300v-5.800M255.500 784.200v15"/>
  <path stroke-width="2" d="M258.700 790.500l2.100 2.100 5.200-5"/>
  <path d="M564.500 782.500h7.300l1.700 1.500 1.700-1.500h7.300v15h-7.300l-1.700 1.800-1.700-1.800h-7.300zM573.500 784v15.500"/>
  <path stroke-width="1.200" d="M566.200 785.400h4.600M566.200 788.400h4.600M566.200 791.400h4.600M566.200 794.500h4.600M576.200 785.400h4.800M576.200 788.400h4.800M576.200 791.400h4.800M576.200 794.500h4.800"/>
  <path stroke-width="1.600" d="M572.500 786h2M572.500 789h2M572.500 792h2M572.500 795h2"/>
  <rect x="609.600" y="782.600" width="18" height="16.800" fill="#cdcdcd"/>
  <path stroke-width="1.200" d="M612.200 786.400h12.700M612.200 789.400h12.700M612.200 792.400h12.700M612.200 795.400h12.700"/>
  <path d="M663 797.100h-8.400v-14.400h15.800v7.300"/>
  <path stroke-width="1.200" d="M657.200 785.400h10.800M657.200 788.400h7.800M657.200 791.500h5.300M657.200 794.500h3.800"/>
 </g>
 <circle cx="668.100" cy="795" r="5.800" fill="#6f6f6f" stroke="#f3f3f3" stroke-width="0.600"/>
 <path fill="#dcdcdc" d="M665 792.800c0.900-1.200 2.300-1.700 3.100-1.200 0.600 0.500-0.300 1.300 0.400 2 0.700 0.800 1.900 0.700 2.100 1.700 0.200 1-0.900 1.300-1.400 2.100-0.400 0.700-1 1.500-1.800 1.200-0.900-0.400-0.300-1.700-0.900-2.500-0.600-0.700-1.700-0.900-1.800-1.900 0-0.500 0.100-1 0.300-1.400zM671 791.500c0.900 0.500 1.600 1.300 2 2.300-0.600 0.200-1.300-0.200-1.700-0.700-0.400-0.500-0.500-1.100-0.300-1.600z"/>
 <rect x="692" y="789.800" width="11" height="2.200" fill="#5a5a5a"/>
 <rect x="709" y="790.300" width="162" height="1.200" fill="#a6a6a6"/>
 <rect x="779" y="783" width="8" height="17" fill="#737373"/>
 <path fill="none" stroke="#5a5a5a" stroke-width="2" d="M863 790.800h11M868.500 785.300v11"/>
</svg>

<div class="a st" style="left:7.300px;word-spacing:0.6px">第 1 页，共 1 页</div>
<div class="a st" style="left:162.500px;word-spacing:1.5px;letter-spacing:0.2px">24 个字</div>
<div class="a st" style="left:286.400px;letter-spacing:-0.1px">中文(中国)</div>
<div class="a st" style="left:888.500px;letter-spacing:0.3px">100%</div>

<div class="a" style="left:818.500px;top:783px;font-family:'Liberation Sans',sans-serif;font-size:15px;font-style:italic;font-weight:bold;color:#fff;opacity:.6;text-shadow:1px 1px 1px rgba(0,0,0,.6);letter-spacing:0.75px;height:20px;line-height:20px">www.cfan.com.cn</div>
</div>
</body>
</html>
